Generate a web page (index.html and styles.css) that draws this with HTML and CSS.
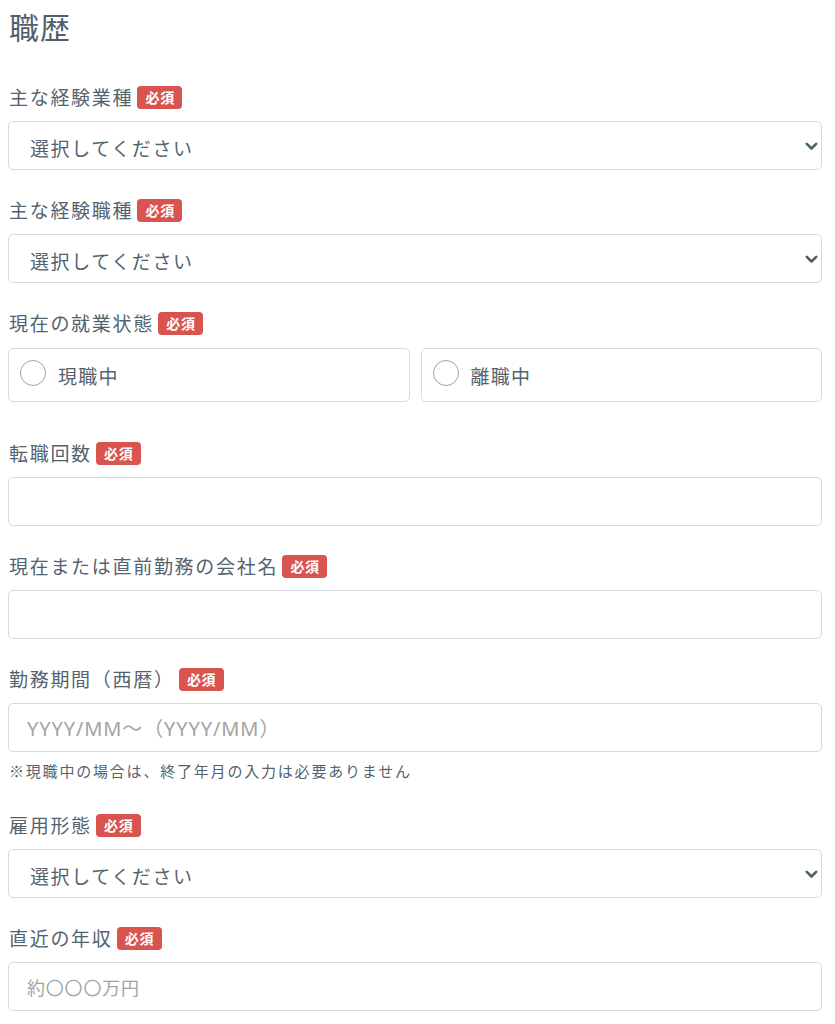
FILE: index.html
```html
<!DOCTYPE html>
<html lang="ja">
<head>
<meta charset="utf-8">
<title>職歴</title>
<link rel="stylesheet" href="styles.css">
</head>
<body>
<main class="form">
  <h1 class="title">職歴</h1>

  <div class="field">
    <div class="label-row"><span class="label">主な経験業種</span><span class="badge">必須</span></div>
    <div class="select-wrap">
      <select class="control select"><option>選択してください</option></select>
      <svg class="chevron" width="13" height="9" viewBox="0 0 13 9"><path d="M1.8 1.8 L6.5 6.5 L11.2 1.8" fill="none" stroke="#4d5e69" stroke-width="2.6" stroke-linecap="round" stroke-linejoin="round"/></svg>
    </div>
  </div>

  <div class="field">
    <div class="label-row"><span class="label">主な経験職種</span><span class="badge">必須</span></div>
    <div class="select-wrap">
      <select class="control select"><option>選択してください</option></select>
      <svg class="chevron" width="13" height="9" viewBox="0 0 13 9"><path d="M1.8 1.8 L6.5 6.5 L11.2 1.8" fill="none" stroke="#4d5e69" stroke-width="2.6" stroke-linecap="round" stroke-linejoin="round"/></svg>
    </div>
  </div>

  <div class="field field-radio">
    <div class="label-row"><span class="label">現在の就業状態</span><span class="badge">必須</span></div>
    <div class="radio-row">
      <label class="radio-box"><span class="radio-circle"></span><span class="radio-text">現職中</span></label>
      <label class="radio-box"><span class="radio-circle"></span><span class="radio-text">離職中</span></label>
    </div>
  </div>

  <div class="field">
    <div class="label-row"><span class="label">転職回数</span><span class="badge">必須</span></div>
    <input class="control" type="text">
  </div>

  <div class="field">
    <div class="label-row"><span class="label">現在または直前勤務の会社名</span><span class="badge">必須</span></div>
    <input class="control" type="text">
  </div>

  <div class="field field-note">
    <div class="label-row"><span class="label">勤務期間（西暦）</span><span class="badge">必須</span></div>
    <input class="control control-date" type="text" placeholder="YYYY/MM～（YYYY/MM）">
    <p class="note">※現職中の場合は、終了年月の入力は必要ありません</p>
  </div>

  <div class="field">
    <div class="label-row"><span class="label">雇用形態</span><span class="badge">必須</span></div>
    <div class="select-wrap">
      <select class="control select"><option>選択してください</option></select>
      <svg class="chevron" width="13" height="9" viewBox="0 0 13 9"><path d="M1.8 1.8 L6.5 6.5 L11.2 1.8" fill="none" stroke="#4d5e69" stroke-width="2.6" stroke-linecap="round" stroke-linejoin="round"/></svg>
    </div>
  </div>

  <div class="field">
    <div class="label-row"><span class="label">直近の年収</span><span class="badge">必須</span></div>
    <input class="control" type="text" placeholder="約〇〇〇万円">
  </div>
</main>
</body>
</html>
```

FILE: styles.css
```css
* { box-sizing: border-box; }

body {
  margin: 0;
  background: #ffffff;
  color: #53636e;
  font-family: "Noto Sans CJK JP", "Noto Sans", sans-serif;
}

.form {
  width: 814px;
  margin-left: 8px;
  padding-top: 8px;
}

.title {
  margin: 0 0 41px 1px;
  font-size: 30px;
  font-weight: 400;
  line-height: 36px;
  letter-spacing: 1px;
  color: #4f606b;
}

.field {
  margin-bottom: 28px;
}

.field-radio {
  margin-bottom: 39px;
}

.field-radio .label-row {
  margin-bottom: 13px;
}

.field-note {
  margin-bottom: 32px;
}

.label-row {
  display: flex;
  align-items: center;
  gap: 4px;
  height: 24px;
  margin-bottom: 12px;
  padding-left: 1px;
}

.label {
  font-size: 19px;
  letter-spacing: 1.7px;
  line-height: 24px;
}

.badge {
  display: inline-flex;
  align-items: center;
  justify-content: center;
  width: 45px;
  height: 23px;
  border-radius: 4px;
  background: #d9534f;
  color: #ffffff;
  font-size: 14px;
  font-weight: 700;
  letter-spacing: 0.05em;
  padding-left: 1px;
}

.control {
  display: block;
  width: 100%;
  height: 49px;
  border: 1px solid #d6dadd;
  border-radius: 5px;
  background: #ffffff;
  padding: 0 0 0 18px;
  font-family: inherit;
  font-size: 19px;
  letter-spacing: 1.6px;
  color: #53636e;
  outline: none;
}

.control::placeholder {
  color: #a3a3a3;
  letter-spacing: 0.8px;
  font-size: 18px;
}

.control-date::placeholder {
  font-family: "Noto Sans", "Noto Sans CJK JP", sans-serif;
  font-size: 20px;
  letter-spacing: 0.9px;
}

.select-wrap {
  position: relative;
}

.select {
  appearance: none;
  -webkit-appearance: none;
  padding-top: 3px;
  padding-left: 21px;
}

.chevron {
  position: absolute;
  right: 4px;
  top: 21px;
  pointer-events: none;
}

.radio-row {
  display: grid;
  grid-template-columns: 1fr 1fr;
  gap: 11px;
}

.radio-box {
  display: flex;
  align-items: center;
  gap: 12px;
  height: 54px;
  border: 1px solid #d6dadd;
  border-radius: 5px;
  padding-left: 11px;
}

.radio-circle {
  width: 26px;
  height: 26px;
  border: 1.5px solid #93a5b0;
  border-radius: 50%;
  margin-top: -5px;
}

.radio-text {
  font-size: 19px;
  letter-spacing: 1.2px;
}

.note {
  margin: 8px 0 0 1px;
  font-size: 15px;
  line-height: 21px;
  letter-spacing: 1.8px;
}
```
